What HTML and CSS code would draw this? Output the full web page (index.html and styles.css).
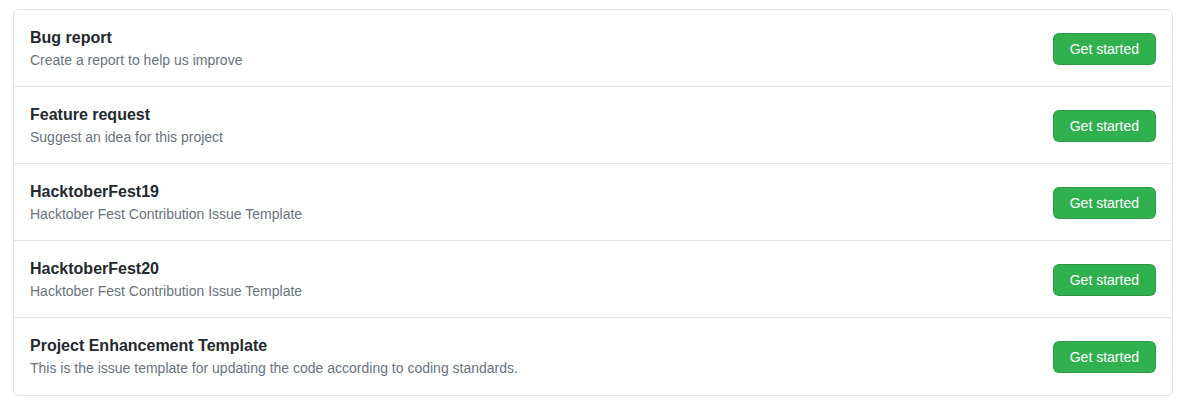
FILE: index.html
```html
<!DOCTYPE html>
<html>
<head>
<meta charset="utf-8">
<link rel="stylesheet" href="styles.css">
</head>
<body>
<div class="box">
  <div class="row">
    <div class="info">
      <div class="title">Bug report</div>
      <div class="desc">Create a report to help us improve</div>
    </div>
    <a class="btn">Get started</a>
  </div>
  <div class="row">
    <div class="info">
      <div class="title">Feature request</div>
      <div class="desc">Suggest an idea for this project</div>
    </div>
    <a class="btn">Get started</a>
  </div>
  <div class="row">
    <div class="info">
      <div class="title">HacktoberFest19</div>
      <div class="desc">Hacktober Fest Contribution Issue Template</div>
    </div>
    <a class="btn">Get started</a>
  </div>
  <div class="row">
    <div class="info">
      <div class="title">HacktoberFest20</div>
      <div class="desc">Hacktober Fest Contribution Issue Template</div>
    </div>
    <a class="btn">Get started</a>
  </div>
  <div class="row">
    <div class="info">
      <div class="title">Project Enhancement Template</div>
      <div class="desc">This is the issue template for updating the code according to coding standards.</div>
    </div>
    <a class="btn">Get started</a>
  </div>
</div>
</body>
</html>
```
FILE: styles.css
```css
html, body { margin: 0; padding: 0; background: #fff; }
body {
  padding: 9px 11px 0 13px;
  font-family: "Liberation Sans", Arial, sans-serif;
  color: #24292e;
}
.box {
  border: 1px solid #e1e4e8;
  border-radius: 6px;
}
.row {
  display: flex;
  align-items: center;
  justify-content: space-between;
  padding: 16px;
  border-top: 1px solid #e1e4e8;
}
.row:first-child { border-top: none; }
.row:last-child { padding-bottom: 17px; }
.title {
  font-size: 16px;
  font-weight: bold;
  line-height: 24px;
  color: #24292e;
}
.desc {
  font-size: 14px;
  line-height: 20px;
  color: #6a737d;
}
.btn {
  display: inline-block;
  box-sizing: border-box;
  height: 32px;
  margin-top: 2px;
  padding: 5px 16px;
  font-size: 14px;
  line-height: 20px;
  color: #fff;
  background: #31b04f;
  border: 1px solid rgba(27,31,35,0.15);
  border-radius: 6px;
  white-space: nowrap;
}
```
